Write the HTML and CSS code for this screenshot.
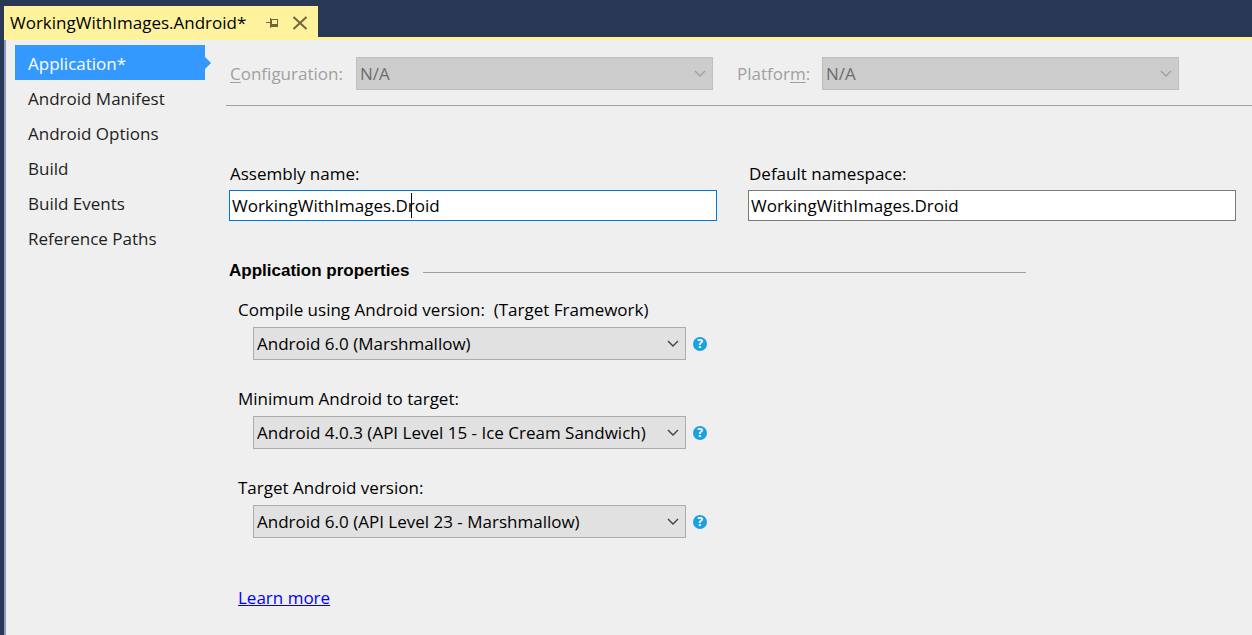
FILE: index.html
```html
<!DOCTYPE html>
<html lang="en">
<head>
<meta charset="utf-8">
<title>WorkingWithImages.Android</title>
<link rel="stylesheet" href="styles.css">
</head>
<body>
<div class="window">
  <header class="tabstrip">
    <div class="tab">
      <span class="tab-title">WorkingWithImages.Android*</span>
      <button class="tab-button" type="button" aria-label="Pin tab">
        <svg width="12" height="12" viewBox="0 0 12 12" shape-rendering="crispEdges" fill="#75633d"><path d="M0 5h4V1h1v1h7v8H5v1H4V6H0zM6 3v4h5V3z" fill-rule="evenodd"/></svg>
      </button>
      <button class="tab-button" type="button" aria-label="Close tab">
        <svg width="16" height="14" viewBox="0 0 16 14" fill="none" stroke="#75633d" stroke-width="2"><path d="M1.500 1l13 12M14.500 1l-13 12"/></svg>
      </button>
    </div>
  </header>
  <div class="document">
    <nav class="sidebar">
      <a class="nav-item nav-item-active" href="#application">Application*</a>
      <a class="nav-item" href="#manifest">Android Manifest</a>
      <a class="nav-item" href="#options">Android Options</a>
      <a class="nav-item" href="#build">Build</a>
      <a class="nav-item" href="#events">Build Events</a>
      <a class="nav-item" href="#paths">Reference Paths</a>
    </nav>
    <main class="page">
      <div class="config">
        <label class="config-label" for="configuration"><u>C</u>onfiguration:</label>
        <div class="combo combo-disabled">
          <select id="configuration" class="select" disabled><option>N/A</option></select>
          <svg class="chevron" width="12" height="7" viewBox="0 0 12 7"><path d="M1 1l5 5 5-5"/></svg>
        </div>
        <label class="config-label platform-label" for="platform">Platfor<u>m</u>:</label>
        <div class="combo combo-disabled">
          <select id="platform" class="select" disabled><option>N/A</option></select>
          <svg class="chevron" width="12" height="7" viewBox="0 0 12 7"><path d="M1 1l5 5 5-5"/></svg>
        </div>
      </div>
      <div class="names">
        <div class="field">
          <label for="assembly">Assembly name:</label>
          <div class="text-wrap">
            <input id="assembly" class="text text-focused" type="text" value="WorkingWithImages.Droid">
            <span class="caret"></span>
          </div>
        </div>
        <div class="field">
          <label for="namespace">Default namespace:</label>
          <input id="namespace" class="text" type="text" value="WorkingWithImages.Droid">
        </div>
      </div>
      <h2 class="section-title">Application properties</h2>
      <div class="properties">
        <div class="property">
          <label for="compile">Compile using Android version:&nbsp; (Target Framework)</label>
          <div class="property-row">
            <div class="combo">
              <select id="compile" class="select"><option>Android 6.0 (Marshmallow)</option></select>
              <svg class="chevron" width="12" height="7" viewBox="0 0 12 7"><path d="M1 1l5 5 5-5"/></svg>
            </div>
            <button class="help" type="button" aria-label="Help on compile version">?</button>
          </div>
        </div>
        <div class="property">
          <label for="minimum">Minimum Android to target:</label>
          <div class="property-row">
            <div class="combo">
              <select id="minimum" class="select"><option>Android 4.0.3 (API Level 15 - Ice Cream Sandwich)</option></select>
              <svg class="chevron" width="12" height="7" viewBox="0 0 12 7"><path d="M1 1l5 5 5-5"/></svg>
            </div>
            <button class="help" type="button" aria-label="Help on minimum version">?</button>
          </div>
        </div>
        <div class="property">
          <label for="target">Target Android version:</label>
          <div class="property-row">
            <div class="combo">
              <select id="target" class="select"><option>Android 6.0 (API Level 23 - Marshmallow)</option></select>
              <svg class="chevron" width="12" height="7" viewBox="0 0 12 7"><path d="M1 1l5 5 5-5"/></svg>
            </div>
            <button class="help" type="button" aria-label="Help on target version">?</button>
          </div>
        </div>
        <a class="learn-more" href="#learn">Learn more</a>
      </div>
    </main>
  </div>
</div>
</body>
</html>
```
FILE: styles.css
```css
* { box-sizing: border-box; }

body {
  margin: 0;
  background: #293955;
  color: #000;
  font: 17px/24px "Open Sans", "Noto Sans", sans-serif;
}

button { border: 0; padding: 0; background: none; }

.window {
  display: flex;
  flex-direction: column;
  min-height: 100vh;
  padding-left: 4px;
}

.tabstrip {
  display: flex;
  padding-top: 6px;
  border-bottom: 3px solid #fff29d;
}

.tab {
  display: flex;
  align-items: center;
  width: 314px;
  height: 31px;
  padding: 2px 10px 0 6px;
  background: #fff29d;
}

.tab-title { flex: 1; white-space: nowrap; }

.tab-button { display: flex; margin-left: 14px; }

.document {
  flex: 1;
  display: flex;
  border-left: 2px solid #8e9bbc;
  background: #efefef;
}

.sidebar {
  flex: none;
  width: 199px;
  padding: 5px 0 0 9px;
}

.nav-item {
  display: block;
  height: 35px;
  padding-left: 13px;
  line-height: 37px;
  color: #1e1e1e;
  text-decoration: none;
}

.nav-item-active {
  position: relative;
  background: #39f;
  color: #fff;
}

.nav-item-active::after {
  content: "";
  position: absolute;
  left: 100%;
  top: 12px;
  border: 6px solid transparent;
  border-left-color: #39f;
  border-right-width: 0;
}

.page {
  flex: 1;
  min-width: 0;
  padding: 0 0 24px 21px;
}

.config {
  display: grid;
  grid-template-columns: 126px 1fr 109px 1fr;
  align-items: center;
  height: 66px;
  padding: 2px 73px 0 4px;
  border-bottom: 1px solid #a0a0a0;
}

.config-label { color: #a0a0a0; }

.config-label u { text-underline-offset: 2px; }

.platform-label { padding-left: 24px; }

.combo { position: relative; height: 33px; }

.select {
  appearance: none;
  width: 100%;
  height: 100%;
  padding: 0 32px 0 3px;
  border: 1px solid #acacac;
  border-radius: 0;
  background: #e1e1e1;
  color: #000;
  font: inherit;
}

.combo-disabled .select {
  border-color: #bfbfbf;
  background: #ccc;
  color: #6d6d6d;
  opacity: 1;
}

.chevron {
  position: absolute;
  right: 7px;
  top: 13px;
  fill: none;
  stroke: #404040;
  stroke-width: 1.4;
  pointer-events: none;
}

.combo-disabled .chevron { stroke: #a0a0a0; }

.names {
  display: grid;
  grid-template-columns: 1fr 1fr;
  gap: 31px;
  padding: 56px 16px 0 3px;
}

.field { display: flex; flex-direction: column; gap: 4px; }

.field label { padding-left: 1px; }

.text-wrap { position: relative; display: flex; }

.text {
  width: 100%;
  height: 31px;
  padding: 0 2px;
  border: 1px solid #7a7a7a;
  border-radius: 0;
  background: #fff;
  color: #000;
  font: inherit;
}

.text-focused { border-color: #0078d7; }

.caret {
  position: absolute;
  left: 182px;
  top: 3px;
  width: 1px;
  height: 25px;
  background: #000;
}

.section-title {
  display: flex;
  align-items: center;
  gap: 14px;
  max-width: 800px;
  margin: 38px 0 0;
  padding-left: 3px;
  font: bold 17px/24px "Liberation Sans", Arial, sans-serif;
}

.section-title::after {
  content: "";
  flex: 1;
  height: 1px;
  margin-top: 2px;
  background: #a0a0a0;
}

.properties {
  display: flex;
  flex-direction: column;
  align-items: flex-start;
  padding: 15px 0 0 12px;
}

.property { margin-bottom: 27px; }

.property label { display: block; margin-bottom: 5px; }

.property-row {
  display: flex;
  align-items: center;
  gap: 7px;
  padding-left: 15px;
}

.property .combo { width: 433px; }

.help {
  width: 14px;
  height: 14px;
  border-radius: 50%;
  background: #1ba1e2;
  color: #fff;
  font: bold 12px/14px "Open Sans", sans-serif;
}

.learn-more { margin-top: 21px; color: #00f; }
```
